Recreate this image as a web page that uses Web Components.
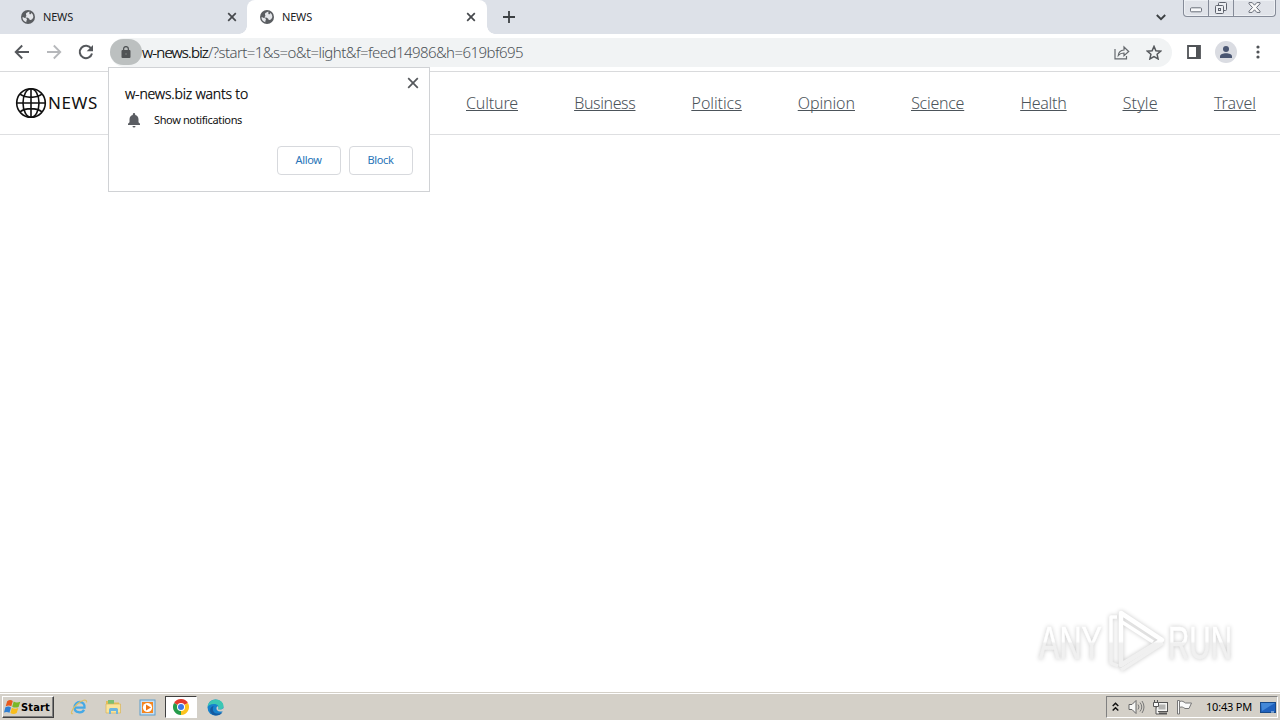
<!DOCTYPE html>
<html lang="en">
<head>
<meta charset="utf-8">
<title>NEWS</title>
<style>
  html, body {
    margin: 0;
    height: 100%;
    overflow: hidden;
    background: #fff;
  }

  body {
    font-family: "Noto Sans", "Open Sans", sans-serif;
    color: #202124;
  }
</style>
</head>
<body>
<desk-top></desk-top>

<script>
const icons = {
  globe: '<svg width="14" height="14" viewBox="0 0 14 14"><circle cx="7" cy="7" r="7" fill="#5a5d61"/><path d="M8.300 1.500C7 2.500 5.300 2.400 5 3.700c-.2 1 .6 1.300.3 2.200-.2.700-1 .9-.7 1.600.4.800 2 .4 3.100.8 1 .4.500 1.500 1.400 1.800 1.200.2 2.700-1.300 3.300-3.100a5.600 5.600 0 0 0-1.900-4.200c-.1.900-.7 1.600-1.600 1.500-1-.1-.2-1.700-.6-2.800zM1.400 7.300c1.200 0 2 .7 3 .8.900.1 1.700.6 1.500 1.600-.1.900-.9 1.100-.5 2.600a5.600 5.600 0 0 1-4-5z" fill="#e4e6ea"/></svg>',
  close: '<svg width="10" height="10" viewBox="0 0 10 10"><path d="M1.200 1.200l7.600 7.600M8.800 1.200L1.200 8.800" stroke="#45484c" stroke-width="1.700"/></svg>',
  dismiss: '<svg width="12" height="12" viewBox="0 0 12 12"><path d="M1.200 1.200l9.600 9.600M10.800 1.200l-9.600 9.600" stroke="#55585c" stroke-width="1.700"/></svg>',
  plus: '<svg width="12" height="12" viewBox="0 0 12 12"><path d="M6 0v12M0 6h12" stroke="#3c4043" stroke-width="1.800"/></svg>',
  chevron: '<svg width="10" height="7" viewBox="0 0 10 7"><path d="M.8 1L5 5.200 9.200 1" fill="none" stroke="#3c4043" stroke-width="1.900"/></svg>',
  back: '<svg width="16" height="16" viewBox="0 0 16 16"><path d="M15 8H2M8.200 1.500L1.700 8l6.500 6.500" fill="none" stroke="#55585c" stroke-width="1.900"/></svg>',
  forward: '<svg width="16" height="16" viewBox="0 0 16 16"><path d="M1 8h13M7.800 1.500L14.300 8l-6.500 6.500" fill="none" stroke="#b6b8bb" stroke-width="1.800"/></svg>',
  reload: '<svg width="16" height="16" viewBox="0 0 16 16"><path d="M13.200 4.600A6.200 6.200 0 1 0 14 9.500" fill="none" stroke="#55585c" stroke-width="2"/><path d="M15 1v6.300H8.700z" fill="#55585c"/></svg>',
  lock: '<svg width="10" height="12" viewBox="0 0 10 12"><rect x=".5" y="4" width="9" height="8" rx="1" fill="#505355"/><path d="M2.600 5V3a2.400 2.400 0 0 1 4.800 0v2" fill="none" stroke="#505355" stroke-width="1.300"/><circle cx="5" cy="8" r="1" fill="#6c7071"/></svg>',
  share: '<svg width="16" height="15" viewBox="0 0 16 15"><path d="M1 4v9.900h11.500V11M4.300 10.500c.3-3.600 2.400-5.300 5.700-5.500V2l4.700 4.500L10 10.700V8c-2.600 0-4.400.8-5.700 2.500z" fill="none" stroke="#65696d" stroke-width="1.200"/></svg>',
  star: '<svg width="16" height="15" viewBox="0 0 16 15"><path d="M8 1.400l1.900 4.300 4.700.5-3.500 3.100 1 4.600L8 11.500l-4.100 2.400 1-4.600L1.400 6.200l4.700-.5z" fill="none" stroke="#55585c" stroke-width="1.500"/></svg>',
  panel: '<svg width="14" height="14" viewBox="0 0 14 14"><path d="M1 1h12v12H1z" fill="none" stroke="#505357" stroke-width="1.800"/><path d="M9 1h4v12H9z" fill="#505357"/></svg>',
  avatar: '<svg width="22" height="22" viewBox="0 0 22 22"><circle cx="11" cy="11" r="11" fill="#dadce2"/><circle cx="11" cy="8" r="3" fill="#4a5672"/><path d="M5 17v-1.500c0-4.200 12-4.200 12 0V17z" fill="#4a5672"/></svg>',
  dots: '<svg width="4" height="14" viewBox="0 0 4 14"><g fill="#505357"><circle cx="2" cy="2" r="1.600"/><circle cx="2" cy="7" r="1.600"/><circle cx="2" cy="12" r="1.600"/></g></svg>',
  bell: '<svg width="12" height="15" viewBox="0 0 12 15"><path d="M0 12h12v-1.300l-1.500-1.400V6.200C10.500 4 9.200 2.500 7.200 2V1.200a1.200 1.200 0 0 0-2.400 0V2c-2 .5-3.300 2-3.300 4.200v3.100L0 10.700zM4.500 13h3a1.500 1.500 0 0 1-3 0z" fill="#5a5d62"/></svg>',
  world: '<svg width="32" height="32" viewBox="0 0 32 32"><g fill="none" stroke="#111" stroke-width="1.600"><circle cx="16" cy="16" r="14.300"/><ellipse cx="16" cy="16" rx="8" ry="14.300"/><path d="M16 1.700v28.600M1.700 16h28.600M5 7.200c6 4.200 16 4.200 22 0M5 24.800c6-4.200 16-4.200 22 0"/></g></svg>',
  minimize: '<svg width="13" height="6" viewBox="0 0 13 6"><rect x=".5" y=".8" width="11" height="4" rx="1" fill="#f8f9fb" stroke="#6a6f7a"/></svg>',
  restore: '<svg width="14" height="14" viewBox="0 0 14 14"><g fill="#eceef2" stroke="#5e636d"><rect x="4.500" y="1.500" width="8" height="8" rx="1"/><rect x="1.500" y="4.500" width="8" height="8" rx="1"/><rect x="4.500" y="7.500" width="2" height="2"/></g></svg>',
  bigClose: '<svg width="13" height="11" viewBox="0 0 13 11"><path d="M1 .6h3.200l2.300 2.600L8.800.6H12v1.200L8.500 5.500 12 9.200v1.200H8.800L6.500 7.800l-2.300 2.600H1V9.200l3.500-3.700L1 1.800z" fill="#fafafa" stroke="#6a6f7a"/></svg>',
  flag: '<svg width="17" height="17" viewBox="0 0 17 17"><path d="M3.200 2.200C5.500.5 7.300 1 8.800 2L7.300 7.300C5.500 6.300 4 6.400 1.700 7.300z" fill="#e8591c"/><path d="M9.700 2.500c2 1.400 4 1.400 6.600.3l-1.700 5.100c-2.200 1-4.400.9-6.400-.2z" fill="#79b829"/><path d="M1.400 8.300c2.200-1 4-.9 5.600.2l-1.500 5.300c-1.800-1.100-3.500-1.100-5.500-.4z" fill="#2f7fd3"/><path d="M7.900 8.800c2 1.200 4 1.300 6.400.3l-1.600 5c-2.200 1.200-4.400 1.200-6.300-.2z" fill="#f8bd1c"/></svg>',
  ie: '<svg width="18" height="18" viewBox="0 0 18 18"><path d="M5 9.700h9.500c.5-3.700-1.900-5.700-4.700-5.700S4.500 6.200 4.500 9.400c0 5.400 7.400 6.700 9.500 2.400" fill="none" stroke="#45a9e6" stroke-width="2.300"/><path d="M3 15.500c-3 1.500-1.500-4 3.500-8.800s11-6.400 10-2.200" fill="none" stroke="#dcbf68" stroke-width="1.200"/></svg>',
  folder: '<svg width="18" height="18" viewBox="0 0 18 18"><path d="M2 3h5l1 1.500h7V14H2z" fill="#e6bd55"/><path d="M4 2h6v4H4z" fill="#7bbf73"/><path d="M2 6h14.500v9H2z" fill="#fae49a" stroke="#d9b45a" stroke-width=".7"/><path d="M5 16v-4.500q0-1.500 1.500-1.500h6q1.500 0 1.500 1.500V16h-2v-3H7v3z" fill="#6db5df"/></svg>',
  player: '<svg width="17" height="17" viewBox="0 0 17 17"><rect x="1" y="1" width="15" height="15" fill="#c8e0f3" stroke="#5c9dcb"/><rect x="3" y="3" width="11" height="11" fill="#f48620"/><circle cx="8.500" cy="8.500" r="4.600" fill="#fff"/><path d="M7 5.500l5 3-5 3z" fill="#ee7614"/></svg>',
  chrome: '<svg width="16" height="16" viewBox="0 0 16 16"><path d="M8 8L1.070 4A8 8 0 0 1 14.930 4z" fill="#e33b2e"/><path d="M8 8l6.930-4A8 8 0 0 1 8 16z" fill="#fcc31e"/><path d="M8 8v8A8 8 0 0 1 1.070 4z" fill="#269c4b"/><circle cx="8" cy="8" r="4" fill="#fff"/><circle cx="8" cy="8" r="3" fill="#3b78e7"/></svg>',
  edge: '<svg width="17" height="17" viewBox="0 0 17 17"><circle cx="8.500" cy="8.500" r="8" fill="#1681cc"/><path d="M.5 8C1 3.500 4.500.5 8.700.5c4.800 0 7.800 3.300 7.800 6.400 0 3-3 4.200-5.600 3.300 2-3-1-5.400-4.200-5.100C3.600 5.400 1.300 6.500.5 8z" fill="#3bc7b4"/><path d="M6.600 7c-2.100 3.800.1 7.700 4.400 7.600 2 0 3.500-.7 4.600-1.700-2 4.200-9.700 5.100-12 .7C2.200 10.500 4 7.300 6.600 7z" fill="#145aa0"/><path d="M16.500 8.500c-.8 2-3.200 2.600-5.600 1.700.6-1 .6-2 .1-3-2 .1-2.600 4.800 2 5.400 1.500.1 2.500-.2 3.500-.7z" fill="#d4d0c8"/></svg>',
  up: '<svg width="7" height="10" viewBox="0 0 7 10"><path d="M.7 4L3.500 1.300 6.300 4M.7 8.500l2.800-2.700 2.800 2.700" fill="none" stroke="#111" stroke-width="1.500"/></svg>',
  sound: '<svg width="17" height="16" viewBox="0 0 17 16"><path d="M1 5.500h3l4-4v13l-4-4H1z" fill="#f8f8f6" stroke="#666"/><path d="M10 5.500q2 2.500 0 5M12 3.500q3.500 4.500 0 9M14 2q4 6 0 12" fill="none" stroke="#777" stroke-width="1"/></svg>',
  network: '<svg width="17" height="17" viewBox="0 0 17 17"><rect x="4.500" y="3.500" width="11" height="9" fill="#f4f4f2" stroke="#555"/><rect x="6.500" y="5.500" width="7" height="5" fill="#b4b4b2"/><path d="M7 14.500h8" stroke="#555" stroke-width="2"/><path d="M1.500 3.500h5v4h-5zM2.500 1v2.500M5.500 1v2.500M4 7.500V15h3" fill="#fafafa" stroke="#555"/></svg>',
  action: '<svg width="17" height="16" viewBox="0 0 17 16"><path d="M1.500 1.500h2V15h-2z" fill="#fafafa" stroke="#777"/><path d="M3.500 2.500c3-1 4 .3 6 1.500h6L13 9.500H9C7 8 5.500 7.500 3.500 8.500z" fill="#fafafa" stroke="#777"/></svg>',
  screen: '<svg width="16" height="13" viewBox="0 0 16 13"><rect x=".5" y="1.500" width="15" height="10" fill="#1f61bd" stroke="#164989"/><path d="M1 2h14L2 10z" fill="#4388d8"/><path d="M11 11h3" stroke="#d2e6f6"/></svg>'
};

const base = `
  :host { display: flex; box-sizing: border-box; }
  * { box-sizing: border-box; }
  svg { display: block; flex: none; }
`;

class UiIcon extends HTMLElement {
  connectedCallback() {
    this.attachShadow({ mode: 'open' }).innerHTML =
      `<style>${base} :host { flex: none; }</style>${icons[this.getAttribute('name')]}`;
  }
}
customElements.define('ui-icon', UiIcon);

// Single line of text, letter-spaced to fill the given width
class FitText extends HTMLElement {
  connectedCallback() {
    this.attachShadow({ mode: 'open' }).innerHTML = `
      <style>
        :host { display: block; flex: none; white-space: nowrap; }
        span { display: block; width: max-content; }
      </style>
      <span><slot></slot></span>
    `;
    const width = parseFloat(this.getAttribute('width'));
    const span = this.shadowRoot.querySelector('span');
    this.style.width = width + 'px';
    const gap = (width - span.getBoundingClientRect().width) / this.textContent.length;
    span.style.letterSpacing = gap.toFixed(3) + 'px';
  }
}
customElements.define('fit-text', FitText);

class BrowserTab extends HTMLElement {
  connectedCallback() {
    this.attachShadow({ mode: 'open' }).innerHTML = `
      <style>
        ${base}
        :host {
          position: relative;
          align-items: center;
          width: 240px;
          height: 34px;
          padding: 0 11px 0 13px;
          font-size: 11px;
          line-height: 16px;
          border-radius: 8px 8px 0 0;
        }
        :host([active]) { background: #fff; }
        /* outward curves at the foot of the active tab */
        :host([active])::before, :host([active])::after {
          content: '';
          position: absolute;
          bottom: 0;
          width: 8px;
          height: 8px;
        }
        :host([active])::before { left: -8px; background: radial-gradient(circle at 0 0, transparent 7.5px, #fff 8px); }
        :host([active])::after { right: -8px; background: radial-gradient(circle at 100% 0, transparent 7.5px, #fff 8px); }
        fit-text { margin-left: 8px; }
        .close { margin-left: auto; }
      </style>
      <ui-icon name="globe"></ui-icon>
      <fit-text width="30">${this.getAttribute('label')}</fit-text>
      <ui-icon class="close" name="close"></ui-icon>
    `;
  }
}
customElements.define('browser-tab', BrowserTab);

class WindowControls extends HTMLElement {
  connectedCallback() {
    this.attachShadow({ mode: 'open' }).innerHTML = `
      <style>
        ${base}
        :host {
          width: 93px;
          height: 17px;
          margin-right: 4px;
          border: 1px solid #858b98;
          border-top: 0;
          border-radius: 0 0 4px 4px;
          background: #e0e3e9;
          box-shadow: inset 0 0 0 1px #edf0f4;
        }
        div { display: flex; justify-content: center; width: 25px; border-right: 1px solid #858b98; }
        div:last-child { flex: 1; border: 0; }
        .min { padding-top: 7px; }
        .max { padding-top: 1px; }
        .x { padding-top: 2px; }
      </style>
      <div class="min"><ui-icon name="minimize"></ui-icon></div>
      <div class="max"><ui-icon name="restore"></ui-icon></div>
      <div class="x"><ui-icon name="bigClose"></ui-icon></div>
    `;
  }
}
customElements.define('window-controls', WindowControls);

class TabStrip extends HTMLElement {
  connectedCallback() {
    this.attachShadow({ mode: 'open' }).innerHTML = `
      <style>
        ${base}
        :host { height: 34px; padding-left: 8px; background: #dde1e8; }
        .add { margin: 11px 0 0 16px; }
        .list { margin: 14px 17px 0 auto; }
        browser-tab[active] { margin-left: -1px; }
      </style>
      <browser-tab label="NEWS"></browser-tab>
      <browser-tab label="NEWS" active></browser-tab>
      <ui-icon class="add" name="plus"></ui-icon>
      <ui-icon class="list" name="chevron"></ui-icon>
      <window-controls></window-controls>
    `;
  }
}
customElements.define('tab-strip', TabStrip);

class BrowserToolbar extends HTMLElement {
  connectedCallback() {
    this.attachShadow({ mode: 'open' }).innerHTML = `
      <style>
        ${base}
        :host {
          align-items: center;
          height: 38px;
          padding: 0 20px 1px 14px;
          background: #fff;
          border-bottom: 1px solid #d9dadc;
        }
        .nav { display: flex; gap: 16px; }
        .omnibox {
          display: flex;
          align-items: center;
          width: 1062px;
          height: 29px;
          margin-left: 16px;
          padding-right: 10px;
          border-radius: 15px;
          background: #f1f3f4;
          font-size: 15px;
          font-weight: 300;
          line-height: 22px;
        }
        .chip {
          display: flex;
          align-items: center;
          justify-content: center;
          width: 32px;
          height: 26px;
          border-radius: 13px;
          background: #bcc0c0;
        }
        .host { color: #000; -webkit-text-stroke: .2px; }
        .path { color: #4d5257; }
        .actions { display: flex; align-items: center; gap: 16px; margin-left: auto; }
        .end { display: flex; align-items: center; margin-left: 15px; }
        .end ui-icon + ui-icon { margin-left: 14px; }
        .end ui-icon:last-child { margin-left: 19px; }
      </style>
      <div class="nav">
        <ui-icon name="back"></ui-icon>
        <ui-icon name="forward"></ui-icon>
        <ui-icon name="reload"></ui-icon>
      </div>
      <div class="omnibox">
        <div class="chip"><ui-icon name="lock"></ui-icon></div>
        <fit-text class="host" width="66">w-news.biz</fit-text>
        <fit-text class="path" width="315">/?start=1&amp;s=o&amp;t=light&amp;f=feed14986&amp;h=619bf695</fit-text>
        <div class="actions">
          <ui-icon name="share"></ui-icon>
          <ui-icon name="star"></ui-icon>
        </div>
      </div>
      <div class="end">
        <ui-icon name="panel"></ui-icon>
        <ui-icon name="avatar"></ui-icon>
        <ui-icon name="dots"></ui-icon>
      </div>
    `;
  }
}
customElements.define('browser-toolbar', BrowserToolbar);

class NewsHeader extends HTMLElement {
  connectedCallback() {
    const links = [
      ['Culture', 52], ['Business', 61], ['Politics', 50], ['Opinion', 57],
      ['Science', 53], ['Health', 46], ['Style', 35], ['Travel', 42]
    ];
    this.attachShadow({ mode: 'open' }).innerHTML = `
      <style>
        ${base}
        :host {
          align-items: center;
          justify-content: space-between;
          height: 63px;
          padding: 0 24px 0 15px;
          border-bottom: 1px solid #dedfe1;
        }
        .logo { display: flex; align-items: center; color: #111; font-size: 17px; line-height: 22px; }
        .logo fit-text { margin-left: 1px; }
        nav {
          display: flex;
          justify-content: space-between;
          width: 790px;
          color: #4c545a;
          font-size: 16px;
          font-weight: 300;
          line-height: 22px;
          text-decoration: underline;
          text-decoration-thickness: 1px;
          text-underline-offset: 1px;
          text-decoration-skip-ink: none;
        }
        nav fit-text { text-decoration: inherit; }
      </style>
      <div class="logo"><ui-icon name="world"></ui-icon><fit-text width="50">NEWS</fit-text></div>
      <nav>${links.map(([text, w]) => `<fit-text width="${w}">${text}</fit-text>`).join('')}</nav>
    `;
  }
}
customElements.define('news-header', NewsHeader);

class PermissionPrompt extends HTMLElement {
  connectedCallback() {
    this.attachShadow({ mode: 'open' }).innerHTML = `
      <style>
        ${base}
        :host {
          flex-direction: column;
          width: 322px;
          height: 125px;
          padding: 9px 16px 16px;
          border: 1px solid #d0d2d5;
          background: #fff;
          color: #111;
          font-size: 11px;
          line-height: 16px;
        }
        .title { display: flex; justify-content: space-between; font-size: 14px; line-height: 20px; height: 32px; }
        .title fit-text { margin-top: 7px; color: #000; font-weight: 300; -webkit-text-stroke: .25px; }
        .title ui-icon { margin-right: -6px; }
        .row { display: flex; align-items: center; gap: 14px; height: 23px; padding-left: 3px; }
        .row fit-text { margin-top: -1px; }
        .buttons { display: flex; justify-content: flex-end; gap: 8px; margin-top: auto; }
        .buttons div {
          display: flex;
          align-items: center;
          justify-content: center;
          width: 64px;
          height: 29px;
          padding: 0 1px 1px 0;
          border: 1px solid #d7d9dd;
          border-radius: 4px;
          color: #2874b8;
        }
      </style>
      <div class="title"><fit-text width="123">w-news.biz wants to</fit-text><ui-icon name="dismiss"></ui-icon></div>
      <div class="row"><ui-icon name="bell"></ui-icon><fit-text width="88">Show notifications</fit-text></div>
      <div class="buttons">
        <div><fit-text width="26">Allow</fit-text></div>
        <div><fit-text width="26">Block</fit-text></div>
      </div>
    `;
  }
}
customElements.define('permission-prompt', PermissionPrompt);

class WaterMark extends HTMLElement {
  connectedCallback() {
    this.attachShadow({ mode: 'open' }).innerHTML = `
      <style>
        ${base}
        :host { width: 210px; height: 70px; }
        svg { overflow: visible; filter: drop-shadow(0 0 2px rgba(0, 0, 0, .22)); }
        text { font: 46px "Liberation Sans Narrow", "Liberation Sans", sans-serif; }
      </style>
      <svg width="210" height="70" viewBox="0 0 210 70">
        <defs>
          <linearGradient id="fade" gradientUnits="userSpaceOnUse" x1="0" y1="5" x2="0" y2="65">
            <stop offset=".52" stop-color="#fff"/>
            <stop offset=".56" stop-color="#f0f0f0"/>
          </linearGradient>
        </defs>
        <g fill="url(#fade)" stroke="url(#fade)" stroke-width=".5">
          <text x="9" y="54" textLength="63" lengthAdjust="spacingAndGlyphs">ANY</text>
          <text x="138" y="54" textLength="64" lengthAdjust="spacingAndGlyphs">RUN</text>
        </g>
        <g fill="none" stroke="url(#fade)" stroke-width="4.500" stroke-linejoin="round">
          <path d="M91 8l41 27-41 25z"/>
          <path d="M87 12h-6v46l7 3M92 17l31 20M91 65l42-27" stroke-width="3.500"/>
        </g>
      </svg>
    `;
  }
}
customElements.define('water-mark', WaterMark);

class TaskBar extends HTMLElement {
  connectedCallback() {
    this.attachShadow({ mode: 'open' }).innerHTML = `
      <style>
        ${base}
        :host {
          align-items: center;
          height: 28px;
          padding: 1px 2px 0;
          background: #d4d0c8;
          border-top: 1px solid #d4d0c8;
          box-shadow: inset 0 1px #fff;
          color: #000;
          font-size: 11px;
          line-height: 16px;
        }
        .start {
          display: flex;
          align-items: center;
          width: 52px;
          height: 22px;
          padding-left: 1px;
          border: 1px solid;
          border-color: #fff #404040 #404040 #fff;
          box-shadow: inset -1px -1px #808080;
          font-family: "DejaVu Sans Condensed", "DejaVu Sans", sans-serif;
          font-weight: bold;
        }
        .start fit-text { margin-top: 1px; }
        .apps { display: flex; align-items: center; margin-left: 8px; }
        .app { display: flex; align-items: center; justify-content: center; width: 34px; height: 22px; }
        .running {
          width: 32px;
          margin: 0 1px;
          background: #fff;
          border: 1px solid;
          border-color: #404040 #fff #fff #404040;
        }
        .tray {
          display: flex;
          align-items: center;
          width: 172px;
          height: 22px;
          margin-left: auto;
          padding-left: 5px;
          border: 1px solid;
          border-color: #808080 #fff #fff #808080;
        }
        .tray ui-icon + ui-icon { margin-left: 7px; }
        .tray ui-icon:first-child + ui-icon { margin-left: 9px; }
        .tray fit-text { margin: 0 8px 0 13px; }
      </style>
      <div class="start"><ui-icon name="flag"></ui-icon><fit-text width="29">Start</fit-text></div>
      <div class="apps">
        <div class="app"><ui-icon name="ie"></ui-icon></div>
        <div class="app"><ui-icon name="folder"></ui-icon></div>
        <div class="app"><ui-icon name="player"></ui-icon></div>
        <div class="app running"><ui-icon name="chrome"></ui-icon></div>
        <div class="app"><ui-icon name="edge"></ui-icon></div>
      </div>
      <div class="tray">
        <ui-icon name="up"></ui-icon>
        <ui-icon name="sound"></ui-icon>
        <ui-icon name="network"></ui-icon>
        <ui-icon name="action"></ui-icon>
        <fit-text width="46">10:43 PM</fit-text>
        <ui-icon name="screen"></ui-icon>
      </div>
    `;
  }
}
customElements.define('task-bar', TaskBar);

class DeskTop extends HTMLElement {
  connectedCallback() {
    this.attachShadow({ mode: 'open' }).innerHTML = `
      <style>
        ${base}
        :host { position: relative; flex-direction: column; width: 1280px; height: 720px; overflow: hidden; }
        main { flex: 1; }
        permission-prompt { position: absolute; left: 108px; top: 67px; }
        water-mark { position: absolute; left: 1030px; top: 605px; }
      </style>
      <tab-strip></tab-strip>
      <browser-toolbar></browser-toolbar>
      <main><news-header></news-header></main>
      <task-bar></task-bar>
      <permission-prompt></permission-prompt>
      <water-mark></water-mark>
    `;
  }
}
customElements.define('desk-top', DeskTop);
</script>
</body>
</html>
